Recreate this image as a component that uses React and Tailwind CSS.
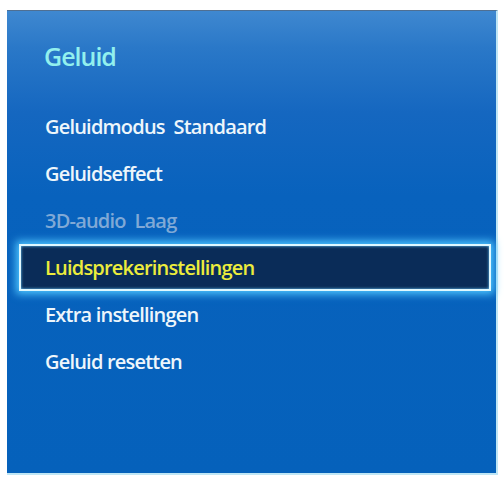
import React from 'react';

const items = [
  { label: 'Geluidmodus  Standaard', state: 'normal' },
  { label: 'Geluidseffect', state: 'normal' },
  { label: '3D-audio  Laag', state: 'disabled' },
  { label: 'Luidsprekerinstellingen', state: 'active' },
  { label: 'Extra instellingen', state: 'normal' },
  { label: 'Geluid resetten', state: 'normal' },
];

export default function App() {
  return (
    <div className="w-[504px] h-[478px] bg-white pt-[10px] pl-[7px]" style={{ fontFamily: '"Open Sans", "Noto Sans", sans-serif' }}>
      <div className="w-[491px] h-[465px] border-t border-[#4f6f92] border-r-2 border-b-2 border-r-[#bfe6f5] border-b-[#bfe6f5] bg-[linear-gradient(180deg,#3f88d0_0%,#2a78c8_8%,#1567c0_22%,#0862bd_40%,#0561bb_100%)] flex flex-col">
        <div className="pl-[37px] pt-[33px] h-[92px] text-[25px] font-semibold tracking-[-1px] text-[#92f0ee] leading-none whitespace-pre">
          Geluid
        </div>
        <div className="flex flex-col pl-[12px] pr-[5px]">
          {items.map((it) => (
            <div
              key={it.label}
              className={`h-[47px] flex items-center whitespace-pre text-[20px] font-semibold tracking-[-0.8px] ${
                it.state === 'active'
                  ? 'bg-[#0a2c58] border-2 border-[#dff8ff] shadow-[0_0_8px_3px_#4fc6ff,inset_0_0_3px_#6fd0ff] text-[#ecec3c] pl-[24px]'
                  : it.state === 'disabled'
                  ? 'text-[#80a9d6] pl-[26px]'
                  : 'text-[#eef6fb] pl-[26px]'
              }`}
            >
              {it.label}
            </div>
          ))}
        </div>
      </div>
    </div>
  );
}
